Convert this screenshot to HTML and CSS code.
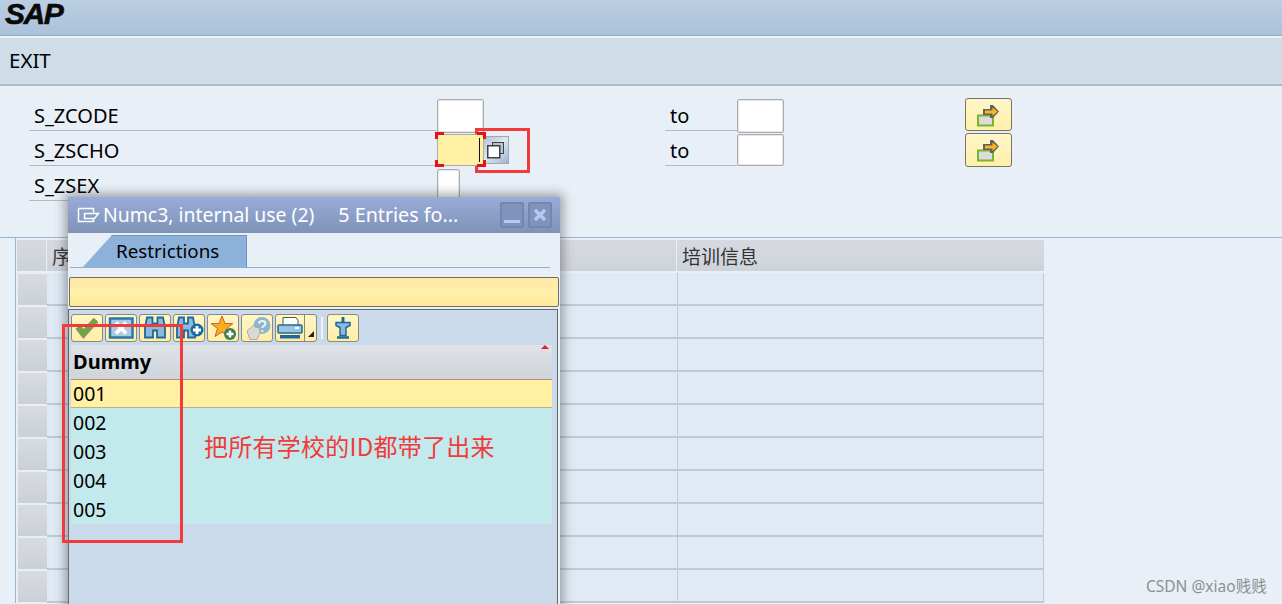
FILE: index.html
```html
<!DOCTYPE html>
<html lang="zh">
<head>
<meta charset="utf-8">
<title>SAP</title>
<link rel="stylesheet" href="styles.css">
</head>
<body>
<div class="page">
  <header class="titlebar"><span class="logo">SAP</span></header>
  <nav class="menubar"><span>EXIT</span></nav>
  <main class="content">
    <section class="form">
      <div class="row">
        <label class="label">S_ZCODE</label>
        <span class="field wide"></span>
        <span class="to">to</span>
        <span class="field wide"></span>
        <button class="run"><svg width="24" height="24" viewBox="0 0 24 24"><rect x="1" y="12.500" width="15" height="10" fill="#dcdcdc" stroke="#7ab32e" stroke-width="2"/><path d="M6 6h7V2h3l6 6.500-6 6.500h-3v-3H6z" fill="#5f6368"/><path d="M8 7.500h7.500V4.500l5 4-5 4.500v-2.500H8z" fill="#fdb714"/></svg></button>
      </div>
      <div class="row">
        <label class="label">S_ZSCHO</label>
        <span class="field wide focus"><i class="caret"></i><i class="c tl"></i><i class="c tr"></i><i class="c bl"></i><i class="c br"></i></span>
        <span class="multi"><svg width="20" height="20" viewBox="0 0 20 20"><rect x="7.500" y="2.500" width="11" height="11" fill="#b9c6d8" stroke="#3f3f3f"/><rect x="2.750" y="5.750" width="12" height="12" fill="#fff" stroke="#3f3f3f" stroke-width="1.500"/></svg></span>
        <span class="to">to</span>
        <span class="field wide"></span>
        <button class="run"><svg width="24" height="24" viewBox="0 0 24 24"><rect x="1" y="12.500" width="15" height="10" fill="#dcdcdc" stroke="#7ab32e" stroke-width="2"/><path d="M6 6h7V2h3l6 6.500-6 6.500h-3v-3H6z" fill="#5f6368"/><path d="M8 7.500h7.500V4.500l5 4-5 4.500v-2.500H8z" fill="#fdb714"/></svg></button>
      </div>
      <div class="row">
        <label class="label">S_ZSEX</label>
        <span class="field narrow"></span>
      </div>
    </section>
    <section class="grid">
      <div class="grid-head">
        <span class="corner"></span>
        <span class="col first">序号</span>
        <span class="col second">培训信息</span>
      </div>
      <div class="grid-row"><span class="rowhead"></span><span class="cell first"></span><span class="cell second"></span></div>
      <div class="grid-row"><span class="rowhead"></span><span class="cell first"></span><span class="cell second"></span></div>
      <div class="grid-row"><span class="rowhead"></span><span class="cell first"></span><span class="cell second"></span></div>
      <div class="grid-row"><span class="rowhead"></span><span class="cell first"></span><span class="cell second"></span></div>
      <div class="grid-row"><span class="rowhead"></span><span class="cell first"></span><span class="cell second"></span></div>
      <div class="grid-row"><span class="rowhead"></span><span class="cell first"></span><span class="cell second"></span></div>
      <div class="grid-row"><span class="rowhead"></span><span class="cell first"></span><span class="cell second"></span></div>
      <div class="grid-row"><span class="rowhead"></span><span class="cell first"></span><span class="cell second"></span></div>
      <div class="grid-row"><span class="rowhead"></span><span class="cell first"></span><span class="cell second"></span></div>
      <div class="grid-row"><span class="rowhead"></span><span class="cell first"></span><span class="cell second"></span></div>
    </section>
  </main>

  <div class="dialog">
    <div class="dlg-title">
      <svg class="dlg-icon" width="23" height="17" viewBox="0 0 23 17"><path d="M1.500 1.500h15v4M16.500 11.500v3h-15v-13" fill="none" stroke="#fff" stroke-width="1.500"/><path d="M7.500 6.500h14l-4 5h-10z" fill="none" stroke="#fff" stroke-width="1.500"/></svg>
      <span class="dlg-name">Numc3, internal use (2)</span>
      <span class="dlg-count">5 Entries fo...</span>
      <span class="win-btn"><i class="min"></i></span>
      <span class="win-btn"><svg width="16" height="16" viewBox="0 0 16 16"><path d="M3 3l10 10M13 3L3 13" stroke="#b4c8f2" stroke-width="3.500"/></svg></span>
    </div>
    <div class="tabs"><span class="tab">Restrictions</span></div>
    <div class="searchbar"></div>
    <div class="panel">
      <div class="toolbar">
        <button class="tb"><svg class="ti" viewBox="0 0 30 26"><path d="M6 12l5.500 7L24 5" fill="none" stroke="#8b8f88" stroke-width="6.500"/><path d="M6 12l5.500 7L24 5" fill="none" stroke="#6aab2b" stroke-width="4"/></svg></button>
        <button class="tb"><svg class="ti" viewBox="0 0 30 26"><rect x="4" y="3.500" width="22.500" height="19" fill="#a9cbe4" stroke="#2a78ad" stroke-width="2.500"/><path d="M10 7.500l10 11M20 7.500l-10 11" stroke="#fff" stroke-width="4"/></svg></button>
        <button class="tb"><svg class="ti" viewBox="0 0 30 26"><path d="M7 2.500h5.500v6h5v-6H23l2 10v10h-8v-7h-4v7H5v-10z" fill="#8dbadc" stroke="#1a6a9e" stroke-width="1.800"/></svg></button>
        <button class="tb"><svg class="ti" viewBox="0 0 30 26"><path d="M5 2.500h5v6h4v-6h5l2 10v10h-7v-7h-4v7H3v-10z" fill="#8dbadc" stroke="#1a6a9e" stroke-width="1.800"/><circle cx="23" cy="15" r="6.500" fill="#1a6a9e"/><path d="M23 11v8M19 15h8" stroke="#fff" stroke-width="2.800"/></svg></button>
        <button class="tb"><svg class="ti" viewBox="0 0 30 26"><path d="M14 1l3 7.500h8l-6.500 5 2.500 8-7-4.500-7 4.500 2.500-8L3 8.500h8z" fill="#f7ad1e" stroke="#d2622a"/><circle cx="22" cy="19" r="6" fill="#3e7e4d"/><path d="M22 15.500v7M18.500 19h7" stroke="#fff" stroke-width="2.500"/></svg></button>
        <button class="tb"><svg class="ti" viewBox="0 0 30 26"><circle cx="20" cy="10.500" r="8.500" fill="#8fb6d1"/><path d="M17 8.500c0-3.500 6.500-3.500 6.500 0 0 2.500-3.200 2-3.200 4.500M20.300 15v2" fill="none" stroke="#eef3f5" stroke-width="2"/><path d="M5 16l7-6 1.500 2.500 3.500 0 1 5-3 7H8z" fill="#dadad4" stroke="#aaa"/></svg></button>
        <button class="tb print">
          <span class="print-main"><svg width="26" height="24" viewBox="0 0 26 24"><path d="M6 1.500h13l2 3v5H6z" fill="#fff" stroke="#555"/><rect x="1" y="9" width="24" height="8" rx="1" fill="#9ec3e0" stroke="#1f6a9c" stroke-width="1.500"/><rect x="18" y="11" width="4" height="2" fill="#fff"/><rect x="3" y="19" width="20" height="3.500" fill="#1f6a9c"/></svg></span>
          <span class="print-arrow"><i></i></span>
        </button>
        <span class="tb-sep"></span>
        <button class="tb"><svg class="ti" viewBox="0 0 30 26"><path d="M15 2v5" stroke="#1a6a9e" stroke-width="3"/><path d="M8 7.500h14v3l-4 2v8h-6v-8l-4-2z" fill="#8dbadc" stroke="#1a6a9e" stroke-width="1.500"/><path d="M9 22.500h12" stroke="#1a6a9e" stroke-width="2.500"/></svg></button>
      </div>
      <div class="list">
        <div class="list-head">Dummy<i class="marker"></i></div>
        <div class="item selected">001</div>
        <div class="item">002</div>
        <div class="item">003</div>
        <div class="item">004</div>
        <div class="item">005</div>
      </div>
    </div>
  </div>

  <div class="mark mark-a"></div>
  <div class="mark mark-b"></div>
  <div class="note">把所有学校的ID都带了出来</div>
  <div class="watermark">CSDN @xiao贱贱</div>
</div>
</body>
</html>
```
FILE: styles.css
```css
* { box-sizing: border-box; }
html, body { margin: 0; padding: 0; height: 100%; overflow: hidden; }
body { background: #e8eff6; font-family: "Noto Sans", "Noto Sans CJK SC", sans-serif; color: #000; }
.page { position: relative; width: 1282px; height: 604px; overflow: hidden; }

.titlebar { height: 38px; background: linear-gradient(#bccfe2, #a9c1da); border-bottom: 2px solid #eef3f7; box-shadow: inset 0 -1px 0 #93adc8; padding-left: 5px; }
.logo { display: block; font: italic bold 30px/27px "Liberation Sans", sans-serif; letter-spacing: -1.500px; color: #0a0a0a; -webkit-text-stroke: .6px #0a0a0a; }
.menubar { height: 48px; background: #cfdde8; border-bottom: 2px solid #aabccc; padding-left: 9px; font-size: 20.500px; line-height: 45px; }

.form { padding: 10px 0 0 29px; height: 151px; }
.row { display: flex; height: 35px; align-items: flex-start; }
.label { width: 408px; height: 35px; border-bottom: 1px solid #b4bac0; padding-left: 5px; font-size: 20px; line-height: 40px; }
.field { display: block; position: relative; height: 34px; margin-top: 3px; background: #fff; border: 1px solid #a9adb1; border-radius: 2px; box-shadow: inset 0 0 0 1px #e6e6e6; }
.field.wide { width: 47px; }
.field.narrow { width: 23px; height: 36px; }
.row:nth-child(2) .field { height: 32px; margin-top: 3px; }
.field.focus { z-index: 1; background: #fff0a3; box-shadow: none; }
.caret { position: absolute; right: 3px; top: 3px; width: 1px; height: 24px; background: #111; }
.c { position: absolute; width: 9px; height: 7px; border: 0 solid #e1141c; }
.tl { left: -3px; top: -3px; border-width: 3px 0 0 3px; }
.tr { right: -3px; top: -3px; border-width: 3px 3px 0 0; }
.bl { left: -3px; bottom: -2px; border-width: 0 0 3px 3px; }
.br { right: -3px; bottom: -2px; border-width: 0 3px 3px 0; }
.multi { display: flex; align-items: center; justify-content: flex-end; width: 29px; height: 28px; margin: 5px 0 0 -4px; padding-right: 3px; background: linear-gradient(135deg, #a9bcd8, #dfe7f0 50%, #9fb4d0); border: 1px solid #a3a8ad; }
.to { width: 72px; height: 35px; margin-left: 181px; border-bottom: 1px solid #b4bac0; padding-left: 5px; font-size: 20px; line-height: 40px; }
.row:nth-child(2) .to { margin-left: 156px; }
.run { display: flex; align-items: center; justify-content: center; width: 47px; height: 34px; margin: 2px 0 0 181px; padding: 0; background: linear-gradient(#fff6c8, #fff0a8); border: 1px solid #75746a; border-radius: 3px; }
.row:first-child .run { height: 33px; }
.row:nth-child(2) .run { height: 34px; margin-top: 2px; }

.grid { border-top: 1px solid #9ab5cf; padding-left: 15px; }
.grid-head { display: flex; width: 1030px; height: 35px; border-left: 1px solid #9ab5cf; padding: 2px 0 2px 1px; background: #e8eff6; }
.corner { width: 29px; margin-right: 1px; background: linear-gradient(#d6dae0, #cdd2d9); }
.col { height: 31px; background: linear-gradient(#d6dae0, #ced3da); font: 19px/31px "Noto Sans CJK SC", serif; color: #333; padding-left: 5px; }
.col.first { width: 630px; border-right: 1px solid #e8eff6; }
.col.second { width: 367px; }
.grid-row { display: flex; width: 1030px; height: 33px; border-left: 1px solid #9ab5cf; background: #e8eff6; }
.rowhead { width: 29px; height: 31px; margin: 1px 1px 0 2px; background: linear-gradient(#d8dce1, #cbd0d7); }
.cell { height: 33px; background: #dfeaf4; border-bottom: 2px solid #bccad6; }
.cell.first { width: 631px; border-right: 1px solid #bccad6; margin-left: -1px; }
.cell.second { width: 366px; border-right: 1px solid #bccad6; }

.dialog { position: absolute; left: 68px; top: 197px; width: 492px; height: 420px; background: #e8eff6; box-shadow: 0 0 10px 3px rgba(60, 60, 60, .45); }
.dlg-title { display: flex; align-items: center; height: 36px; padding: 0 8px 0 9px; background: linear-gradient(#98acd8, #7f92b6); color: #fff; font-size: 19.400px; }
.dlg-icon { margin-right: 3px; }
.dlg-name { margin-right: 24px; white-space: nowrap; line-height: 34px; }
.dlg-count { flex: 1; white-space: nowrap; line-height: 34px; font-size: 19.700px; }
.win-btn { display: flex; align-items: center; justify-content: center; width: 24px; height: 26px; margin-left: 4px; background: #7f93bd; border: 2px solid #7386ac; border-radius: 2px; }
.min { display: block; width: 16px; height: 3px; margin-top: 13px; background: #b4c8f2; }
.tabs { height: 33px; margin: 2px 10px 0 2px; padding-left: 12px; border-bottom: 1px solid #8db0d6; }
.tab { display: block; width: 165px; height: 33px; padding-left: 34px; background: #8cb2dc; box-shadow: inset -1px 1px 0 #6f96c0; clip-path: polygon(30px 0, 100% 0, 100% 100%, 0 100%); font-size: 18.800px; line-height: 33px; }
.searchbar { height: 30px; margin: 9px 1px 2px 1px; background: linear-gradient(#ffe9a5, #fff0a8 60%, #ffe896); border: 1px solid #6d6d6d; border-radius: 2px; }
.panel { height: 300px; margin-right: 2px; padding: 3px 6px 0 2px; background: #cbdaea; border: 1px solid #666; }
.toolbar { display: flex; align-items: center; gap: 2px; height: 29px; margin-bottom: 3px; }
.tb { display: flex; align-items: center; justify-content: center; width: 32px; height: 28px; padding: 0; background: linear-gradient(#fff6c8, #ffeea5); border: 1px solid #8d8a76; border-radius: 3px; flex: none; }
.ti { display: block; width: 30px; height: 26px; flex: none; }
.tb.print { width: 42px; justify-content: flex-start; }
.print-main { display: flex; width: 29px; height: 26px; justify-content: center; align-items: center; border-right: 1px solid #8d8a76; }
.print-arrow { display: flex; flex: 1; height: 26px; align-items: flex-end; justify-content: center; padding-bottom: 4px; }
.print-arrow i { display: block; width: 0; height: 0; border-left: 6px solid transparent; border-bottom: 6px solid #222; }
.tb-sep { width: 2px; height: 22px; margin: 0 2px; background: #eef3f7; flex: none; }
.list { width: 481px; }
.list-head { position: relative; height: 35px; padding-left: 2px; background: linear-gradient(#dfe3e8, #cfd4db); border-bottom: 1px solid #b58d78; font-size: 20px; font-weight: 700; line-height: 34px; }
.marker { position: absolute; right: 3px; top: 0; width: 0; height: 0; border: 4px solid transparent; border-top: 0; border-bottom: 4px solid #d22; }
.item { height: 29px; padding-left: 2px; background: #c2e9ec; font-size: 19.500px; line-height: 29px; }
.item.selected { height: 28px; background: #fff0a3; border-bottom: 1px solid #b9b18a; line-height: 27px; }

.mark { position: absolute; border: 3px solid #f33a3a; }
.mark-a { left: 475px; top: 128px; width: 55px; height: 45px; }
.mark-b { left: 62px; top: 324px; width: 121px; height: 219px; }
.note { position: absolute; left: 204px; top: 429px; font: 24px/34px "Noto Sans CJK SC", sans-serif; letter-spacing: .25px; color: #f33a3a; white-space: nowrap; }
.watermark { position: absolute; left: 1146px; top: 576px; font: 15.500px/20px "Noto Sans", "Noto Sans CJK SC", sans-serif; color: #8e8f91; white-space: nowrap; }
```
